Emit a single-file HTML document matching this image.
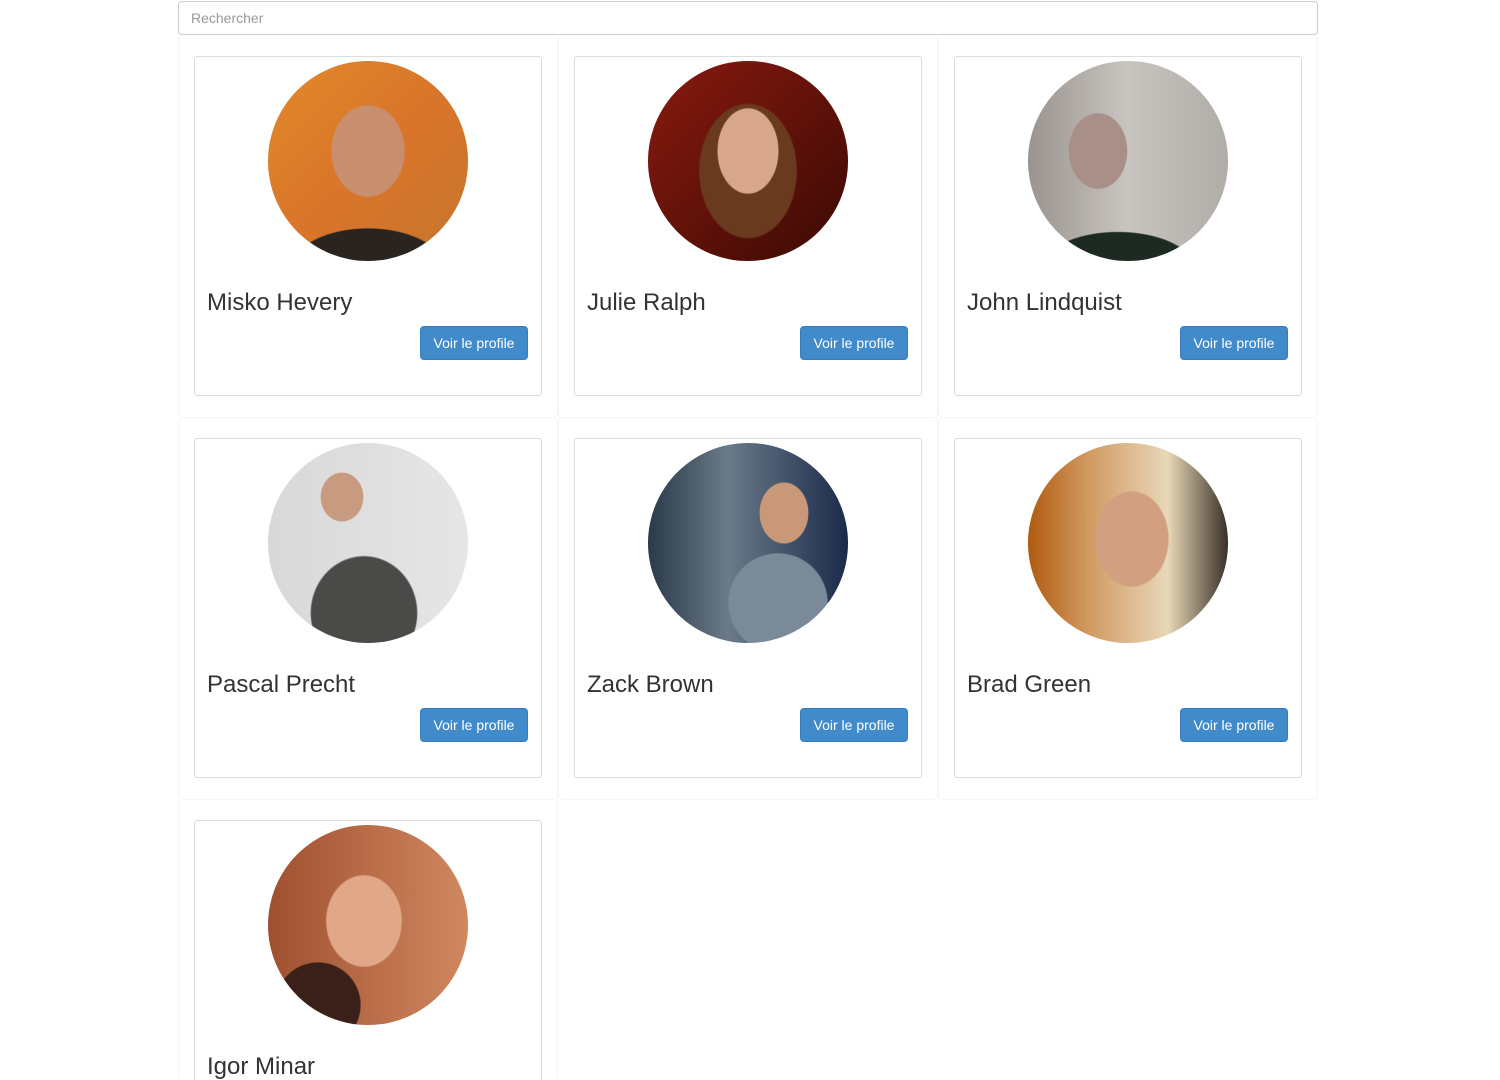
<!DOCTYPE html>
<html style="overflow:hidden;height:1080px"><head><style>
body{margin:0;background:#fff;font-family:"Liberation Sans",sans-serif;width:1500px;height:1080px;overflow:hidden;position:relative}
.search{position:absolute;left:178px;top:1px;width:1138px;height:32px;border:1px solid #ccc;border-radius:4px;box-sizing:content-box}
.search span{position:absolute;left:12px;top:8px;font-size:14px;color:#999}
.outer{position:absolute;width:380px;height:382px;border:1px solid #f6f6f6;border-top-color:#fff;border-radius:4px;box-sizing:border-box}
.card{position:absolute;width:348px;height:340px;border:1px solid #ddd;border-radius:3px;box-sizing:border-box;background:#fff}
.av{position:absolute;left:73px;top:4px;width:200px;height:200px;border-radius:50%;overflow:hidden}
.name{position:absolute;left:12px;top:232px;font-size:24px;color:#333}
.btn{position:absolute;left:225px;top:269px;width:108px;height:34px;background:#428bca;border:1px solid #357ebd;border-radius:4px;box-sizing:border-box;color:#fff;font-size:14px;text-align:center;line-height:32px}
</style></head><body>
<div class="search"><span>Rechercher</span></div>

<div class="outer" style="left:178px;top:36px"></div>
<div class="outer" style="left:558px;top:36px"></div>
<div class="outer" style="left:938px;top:36px"></div>
<div class="outer" style="left:178px;top:418px"></div>
<div class="outer" style="left:558px;top:418px"></div>
<div class="outer" style="left:938px;top:418px"></div>
<div class="outer" style="left:178px;top:800px;height:280px;border-bottom:none"></div>

<div class="card" style="left:194px;top:56px"><div class="av" style="background:radial-gradient(ellipse 60px 75px at 50% 45%,#c98e6e 60%,transparent 62%),radial-gradient(ellipse 110px 60px at 50% 105%,#2a2421 70%,transparent 72%),linear-gradient(135deg,#e08a2a,#d9752a 50%,#c7752e)"></div><div class="name">Misko Hevery</div><div class="btn">Voir le profile</div></div>
<div class="card" style="left:574px;top:56px"><div class="av" style="background:radial-gradient(ellipse 50px 70px at 50% 45%,#d8a68a 60%,transparent 62%),radial-gradient(ellipse 80px 110px at 50% 55%,#6a3a1e 60%,transparent 62%),linear-gradient(135deg,#8a1a10,#5a1008 60%,#3a0a05)"></div><div class="name">Julie Ralph</div><div class="btn">Voir le profile</div></div>
<div class="card" style="left:954px;top:56px"><div class="av" style="background:radial-gradient(ellipse 48px 62px at 35% 45%,#a89088 60%,transparent 62%),radial-gradient(ellipse 110px 55px at 45% 105%,#1c2a22 70%,transparent 72%),linear-gradient(90deg,#9a9490,#c8c4c0 50%,#b0aca8)"></div><div class="name">John Lindquist</div><div class="btn">Voir le profile</div></div>

<div class="card" style="left:194px;top:438px"><div class="av" style="background:radial-gradient(ellipse 35px 40px at 37% 27%,#c89a80 60%,transparent 62%),radial-gradient(ellipse 75px 80px at 48% 85%,#4a4a48 70%,transparent 72%),linear-gradient(90deg,#d8d8d8,#e6e6e6)"></div><div class="name">Pascal Precht</div><div class="btn">Voir le profile</div></div>
<div class="card" style="left:574px;top:438px"><div class="av" style="background:radial-gradient(ellipse 40px 50px at 68% 35%,#c89878 60%,transparent 62%),radial-gradient(ellipse 70px 70px at 65% 80%,#7a8a98 70%,transparent 72%),linear-gradient(90deg,#2a3a4a,#6a7a88 40%,#1a2a4a)"></div><div class="name">Zack Brown</div><div class="btn">Voir le profile</div></div>
<div class="card" style="left:954px;top:438px"><div class="av" style="background:radial-gradient(ellipse 60px 78px at 52% 48%,#d2a080 60%,transparent 62%),linear-gradient(90deg,#b05a10,#d09a60 30%,#e8d8b8 70%,#3a3028)"></div><div class="name">Brad Green</div><div class="btn">Voir le profile</div></div>

<div class="card" style="left:194px;top:820px;height:260px;border-bottom:none;border-radius:3px 3px 0 0"><div class="av" style="background:radial-gradient(ellipse 62px 75px at 48% 48%,#e0a888 60%,transparent 62%),radial-gradient(ellipse 60px 60px at 25% 90%,#3a2018 70%,transparent 72%),linear-gradient(90deg,#a05030,#d08860)"></div><div class="name">Igor Minar</div></div>
</body></html>
